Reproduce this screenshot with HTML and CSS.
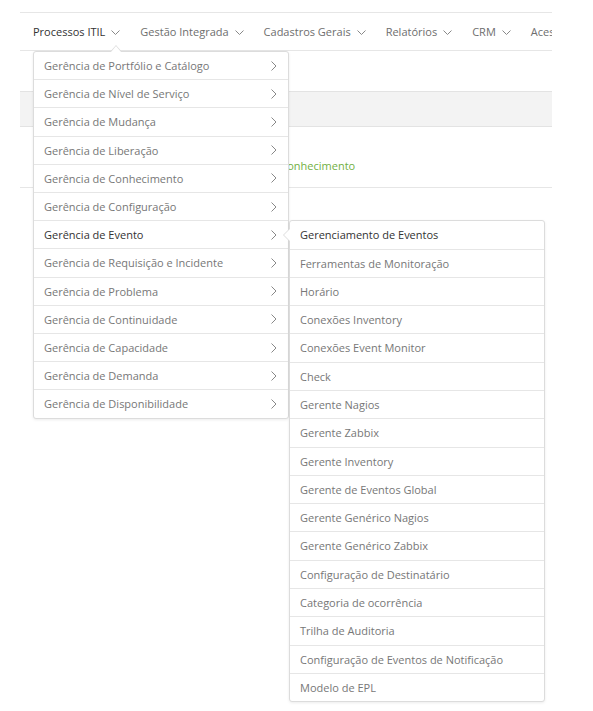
FILE: index.html
```html
<!DOCTYPE html>
<html lang="pt-BR">
<head>
<meta charset="utf-8">
<title>Menu</title>
<link rel="stylesheet" href="styles.css">
</head>
<body>
<div class="page">
  <nav class="topnav">
    <div class="nav-links">
      <div class="nav-item active"><span>Processos ITIL</span><svg class="caret-down" width="9" height="5" viewBox="0 0 9 5"><polyline points="0.5,0.5 4.5,4.5 8.5,0.5" fill="none" stroke="currentColor" stroke-width="1"/></svg></div>
      <div class="nav-item"><span>Gestão Integrada</span><svg class="caret-down" width="9" height="5" viewBox="0 0 9 5"><polyline points="0.5,0.5 4.5,4.5 8.5,0.5" fill="none" stroke="currentColor" stroke-width="1"/></svg></div>
      <div class="nav-item"><span>Cadastros Gerais</span><svg class="caret-down" width="9" height="5" viewBox="0 0 9 5"><polyline points="0.5,0.5 4.5,4.5 8.5,0.5" fill="none" stroke="currentColor" stroke-width="1"/></svg></div>
      <div class="nav-item"><span>Relatórios</span><svg class="caret-down" width="9" height="5" viewBox="0 0 9 5"><polyline points="0.5,0.5 4.5,4.5 8.5,0.5" fill="none" stroke="currentColor" stroke-width="1"/></svg></div>
      <div class="nav-item"><span>CRM</span><svg class="caret-down" width="9" height="5" viewBox="0 0 9 5"><polyline points="0.5,0.5 4.5,4.5 8.5,0.5" fill="none" stroke="currentColor" stroke-width="1"/></svg></div>
      <div class="nav-item"><span>Acesso</span><svg class="caret-down" width="9" height="5" viewBox="0 0 9 5"><polyline points="0.5,0.5 4.5,4.5 8.5,0.5" fill="none" stroke="currentColor" stroke-width="1"/></svg></div>
    </div>
    <ul class="dropdown">
      <li class="dd-item"><span>Gerência de Portfólio e Catálogo</span><svg class="chev" width="6" height="10" viewBox="0 0 6 10"><polyline points="0.5,0.5 5,5 0.5,9.5" fill="none" stroke="currentColor"/></svg></li>
      <li class="dd-item"><span>Gerência de Nível de Serviço</span><svg class="chev" width="6" height="10" viewBox="0 0 6 10"><polyline points="0.5,0.5 5,5 0.5,9.5" fill="none" stroke="currentColor"/></svg></li>
      <li class="dd-item"><span>Gerência de Mudança</span><svg class="chev" width="6" height="10" viewBox="0 0 6 10"><polyline points="0.5,0.5 5,5 0.5,9.5" fill="none" stroke="currentColor"/></svg></li>
      <li class="dd-item"><span>Gerência de Liberação</span><svg class="chev" width="6" height="10" viewBox="0 0 6 10"><polyline points="0.5,0.5 5,5 0.5,9.5" fill="none" stroke="currentColor"/></svg></li>
      <li class="dd-item"><span>Gerência de Conhecimento</span><svg class="chev" width="6" height="10" viewBox="0 0 6 10"><polyline points="0.5,0.5 5,5 0.5,9.5" fill="none" stroke="currentColor"/></svg></li>
      <li class="dd-item"><span>Gerência de Configuração</span><svg class="chev" width="6" height="10" viewBox="0 0 6 10"><polyline points="0.5,0.5 5,5 0.5,9.5" fill="none" stroke="currentColor"/></svg></li>
      <li class="dd-item open"><span>Gerência de Evento</span><svg class="chev" width="6" height="10" viewBox="0 0 6 10"><polyline points="0.5,0.5 5,5 0.5,9.5" fill="none" stroke="currentColor"/></svg>
        <ul class="submenu">
          <li class="sub-item current">Gerenciamento de Eventos</li>
          <li class="sub-item">Ferramentas de Monitoração</li>
          <li class="sub-item">Horário</li>
          <li class="sub-item">Conexões Inventory</li>
          <li class="sub-item">Conexões Event Monitor</li>
          <li class="sub-item">Check</li>
          <li class="sub-item">Gerente Nagios</li>
          <li class="sub-item">Gerente Zabbix</li>
          <li class="sub-item">Gerente Inventory</li>
          <li class="sub-item">Gerente de Eventos Global</li>
          <li class="sub-item">Gerente Genérico Nagios</li>
          <li class="sub-item">Gerente Genérico Zabbix</li>
          <li class="sub-item">Configuração de Destinatário</li>
          <li class="sub-item">Categoria de ocorrência</li>
          <li class="sub-item">Trilha de Auditoria</li>
          <li class="sub-item">Configuração de Eventos de Notificação</li>
          <li class="sub-item">Modelo de EPL</li>
        </ul>
      </li>
      <li class="dd-item"><span>Gerência de Requisição e Incidente</span><svg class="chev" width="6" height="10" viewBox="0 0 6 10"><polyline points="0.5,0.5 5,5 0.5,9.5" fill="none" stroke="currentColor"/></svg></li>
      <li class="dd-item"><span>Gerência de Problema</span><svg class="chev" width="6" height="10" viewBox="0 0 6 10"><polyline points="0.5,0.5 5,5 0.5,9.5" fill="none" stroke="currentColor"/></svg></li>
      <li class="dd-item"><span>Gerência de Continuidade</span><svg class="chev" width="6" height="10" viewBox="0 0 6 10"><polyline points="0.5,0.5 5,5 0.5,9.5" fill="none" stroke="currentColor"/></svg></li>
      <li class="dd-item"><span>Gerência de Capacidade</span><svg class="chev" width="6" height="10" viewBox="0 0 6 10"><polyline points="0.5,0.5 5,5 0.5,9.5" fill="none" stroke="currentColor"/></svg></li>
      <li class="dd-item"><span>Gerência de Demanda</span><svg class="chev" width="6" height="10" viewBox="0 0 6 10"><polyline points="0.5,0.5 5,5 0.5,9.5" fill="none" stroke="currentColor"/></svg></li>
      <li class="dd-item"><span>Gerência de Disponibilidade</span><svg class="chev" width="6" height="10" viewBox="0 0 6 10"><polyline points="0.5,0.5 5,5 0.5,9.5" fill="none" stroke="currentColor"/></svg></li>
    </ul>
  </nav>
  <div class="toolbar"></div>
  <div class="breadcrumb"><span>Início / Base de Conhecimento</span></div>
</div>
</body>
</html>
```

FILE: styles.css
```css
* { box-sizing: border-box; }
html, body { margin: 0; padding: 0; background: #fff; }
body {
  font-family: "Open Sans", "Noto Sans", "DejaVu Sans", sans-serif;
  font-size: 11px;
  color: #777;
  min-height: 711px;
}
.page {
  width: 532px;
  min-height: 711px;
  margin-left: 20px;
  padding-top: 12px;
}
.topnav {
  position: relative;
  height: 39px;
  border-top: 1px solid #e6e6e6;
  border-bottom: 1px solid #e6e6e6;
}
.nav-links {
  display: flex;
  align-items: center;
  height: 100%;
  padding-left: 13px;
  white-space: nowrap;
  overflow: hidden;
}
.nav-item {
  display: flex;
  align-items: center;
  gap: 6px;
  margin-right: 20px;
  color: #6e6e6e;
  height: 100%;
  flex: none;
}
.nav-item.active { color: #333; }
.caret-down { color: #888; margin-top: 2px; }
.dropdown {
  position: absolute;
  top: 38px;
  left: 13px;
  width: 256px;
  margin: 0;
  padding: 0;
  list-style: none;
  background: #fff;
  border: 1px solid #dcdcdc;
  border-radius: 3px;
  box-shadow: 0 1px 3px rgba(0,0,0,0.08);
  z-index: 10;
}
.dropdown::before,
.dropdown::after {
  content: "";
  position: absolute;
  left: 76px;
  width: 0;
  height: 0;
  border-style: solid;
  border-color: transparent;
}
.dropdown::before {
  top: -7px;
  border-width: 0 6px 7px 6px;
  border-bottom-color: #dcdcdc;
}
.dropdown::after {
  top: -6px;
  left: 77px;
  border-width: 0 5px 6px 5px;
  border-bottom-color: #fff;
}
.dd-item {
  position: relative;
  display: flex;
  align-items: center;
  justify-content: space-between;
  padding: 5px 11px 5px 10px;
  line-height: 17.2px;
  border-bottom: 1px solid #e6e6e6;
  color: #777;
}
.dd-item:last-child { border-bottom: none; }
.dd-item.open > span { color: #333; }
.chev { color: #888; flex: none; }
.submenu {
  position: absolute;
  top: -1px;
  left: 255px;
  width: 256px;
  margin: 0;
  padding: 0;
  list-style: none;
  background: #fff;
  border: 1px solid #dcdcdc;
  border-radius: 3px;
  box-shadow: 0 1px 3px rgba(0,0,0,0.08);
}
.submenu::before,
.submenu::after {
  content: "";
  position: absolute;
  width: 0;
  height: 0;
  border-style: solid;
  border-color: transparent;
}
.submenu::before {
  top: 7px;
  left: -7px;
  border-width: 7px 7px 7px 0;
  border-right-color: #dcdcdc;
}
.submenu::after {
  top: 8px;
  left: -6px;
  border-width: 6px 6px 6px 0;
  border-right-color: #fff;
}
.sub-item {
  padding: 5px 10px;
  line-height: 17.3px;
  border-bottom: 1px solid #e6e6e6;
  color: #777;
}
.sub-item:last-child { border-bottom: none; }
.sub-item.current { color: #333; }
.toolbar {
  margin-top: 40px;
  height: 36px;
  background: #f3f3f3;
  border-top: 1px solid #e3e3e3;
  border-bottom: 1px solid #e3e3e3;
}
.breadcrumb {
  padding: 30px 0 13px 180px;
  line-height: 17px;
  color: #72b043;
  border-bottom: 1px solid #e6e6e6;
}
```
